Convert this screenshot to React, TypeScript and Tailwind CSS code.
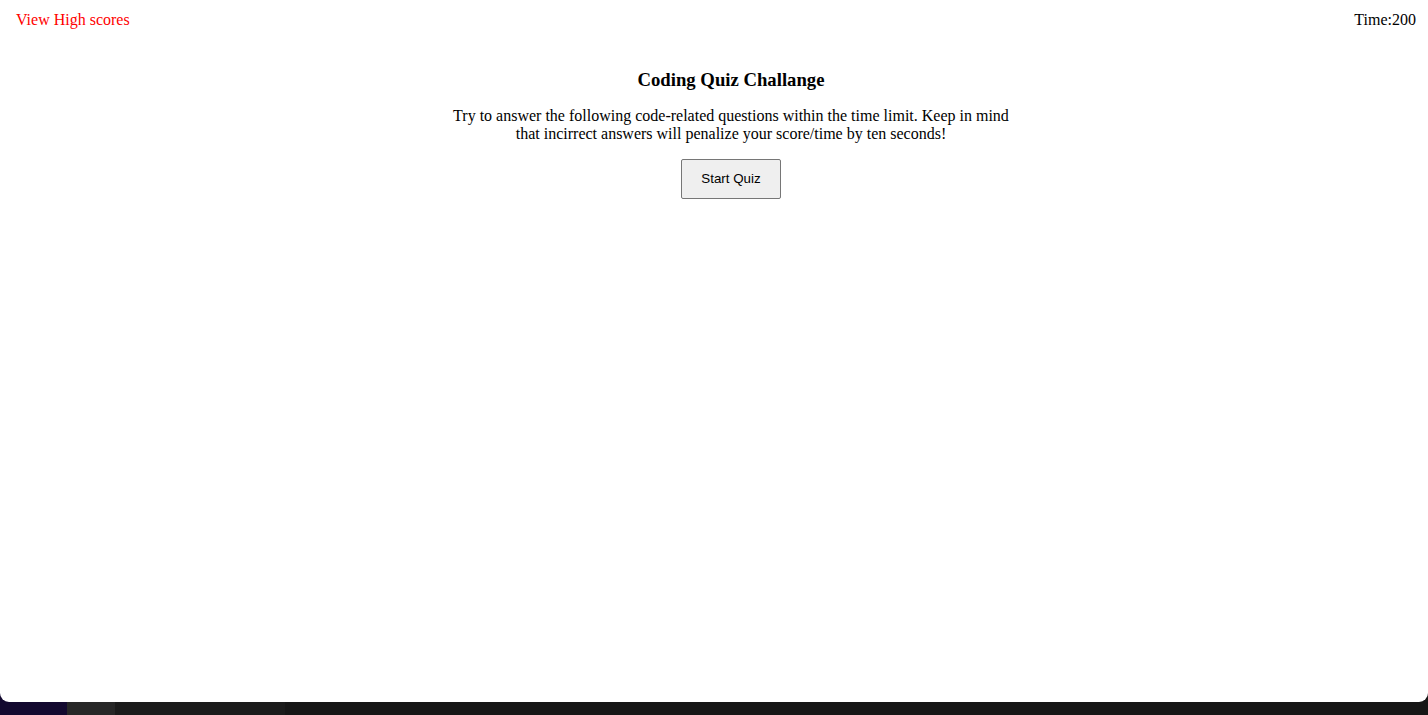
export default function App() {
  const SEGMENTS = [
    { w: "w-[67px]", bg: "bg-[#13092f]" },
    { w: "w-[48px]", bg: "bg-[#272727]" },
    { w: "w-[170px]", bg: "bg-[#1b1b1b]" },
    { w: "flex-1", bg: "bg-[#161616]" },
  ];

  return (
    <div className="h-[715px] w-full overflow-hidden bg-[#161616] flex flex-col font-['Liberation_Serif',serif] text-black">
      <div className="relative z-10 h-[702px] bg-white rounded-b-[9px]">
        <header className="flex justify-between items-start pt-[11px] px-[12px] pl-[16px] text-[16px] leading-[18px]">
          <a href="#highscores" className="text-[#ff0000]">
            View High scores
          </a>
          <p>Time:200</p>
        </header>

        <main className="flex justify-center pl-[34px] pt-[40px]">
          <div className="w-[570px] flex flex-col items-center text-center">
            <h3 className="text-[18.72px] leading-[22px] font-bold">Coding Quiz Challange</h3>
            <p className="mt-[16px] text-[16px] leading-[18px]">
              Try to answer the following code-related questions within the time limit. Keep in mind
              that incirrect answers will penalize your score/time by ten seconds!
            </p>
            <button
              type="button"
              className="mt-[16px] w-[100px] h-[40px] bg-[#efefef] border border-[#767676] rounded-[2px] font-['Liberation_Sans',sans-serif] text-[13.33px]"
            >
              Start Quiz
            </button>
          </div>
        </main>
      </div>

      <div className="-mt-[10px] h-[23px] flex">
        {SEGMENTS.map((s, i) => (
          <div key={i} className={`${s.w} ${s.bg} h-full`} />
        ))}
      </div>
    </div>
  );
}
